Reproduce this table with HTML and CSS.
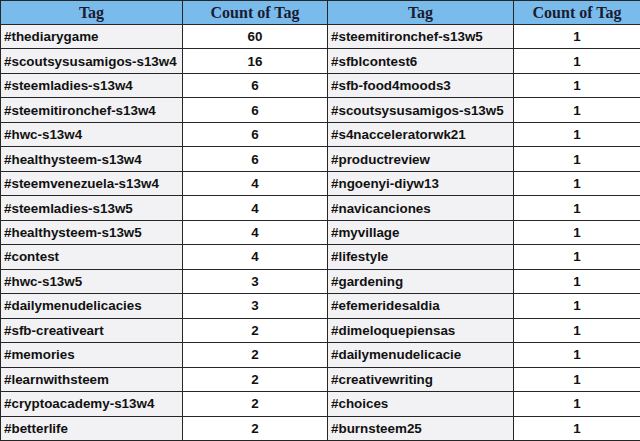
FILE: index.html
```html
<!DOCTYPE html>
<html>
<head>
<meta charset="utf-8">
<link rel="stylesheet" href="styles.css">
</head>
<body>
<table class="tags">
<colgroup><col class="c1"><col class="c2"><col class="c3"><col class="c4"></colgroup>
<thead>
<tr><th>Tag</th><th>Count of Tag</th><th>Tag</th><th>Count of Tag</th></tr>
</thead>
<tbody>
<tr><td class="tag">#thediarygame</td><td class="num">60</td><td class="tag">#steemitironchef-s13w5</td><td class="num">1</td></tr>
<tr><td class="tag">#scoutsysusamigos-s13w4</td><td class="num">16</td><td class="tag">#sfblcontest6</td><td class="num">1</td></tr>
<tr><td class="tag">#steemladies-s13w4</td><td class="num">6</td><td class="tag">#sfb-food4moods3</td><td class="num">1</td></tr>
<tr><td class="tag">#steemitironchef-s13w4</td><td class="num">6</td><td class="tag">#scoutsysusamigos-s13w5</td><td class="num">1</td></tr>
<tr><td class="tag">#hwc-s13w4</td><td class="num">6</td><td class="tag">#s4nacceleratorwk21</td><td class="num">1</td></tr>
<tr><td class="tag">#healthysteem-s13w4</td><td class="num">6</td><td class="tag">#productreview</td><td class="num">1</td></tr>
<tr><td class="tag">#steemvenezuela-s13w4</td><td class="num">4</td><td class="tag">#ngoenyi-diyw13</td><td class="num">1</td></tr>
<tr><td class="tag">#steemladies-s13w5</td><td class="num">4</td><td class="tag">#navicanciones</td><td class="num">1</td></tr>
<tr><td class="tag">#healthysteem-s13w5</td><td class="num">4</td><td class="tag">#myvillage</td><td class="num">1</td></tr>
<tr><td class="tag">#contest</td><td class="num">4</td><td class="tag">#lifestyle</td><td class="num">1</td></tr>
<tr><td class="tag">#hwc-s13w5</td><td class="num">3</td><td class="tag">#gardening</td><td class="num">1</td></tr>
<tr><td class="tag">#dailymenudelicacies</td><td class="num">3</td><td class="tag">#efemeridesaldia</td><td class="num">1</td></tr>
<tr><td class="tag">#sfb-creativeart</td><td class="num">2</td><td class="tag">#dimeloquepiensas</td><td class="num">1</td></tr>
<tr><td class="tag">#memories</td><td class="num">2</td><td class="tag">#dailymenudelicacie</td><td class="num">1</td></tr>
<tr><td class="tag">#learnwithsteem</td><td class="num">2</td><td class="tag">#creativewriting</td><td class="num">1</td></tr>
<tr><td class="tag">#cryptoacademy-s13w4</td><td class="num">2</td><td class="tag">#choices</td><td class="num">1</td></tr>
<tr><td class="tag">#betterlife</td><td class="num">2</td><td class="tag">#burnsteem25</td><td class="num">1</td></tr>
</tbody>
</table>
</body>
</html>
```
FILE: styles.css
```css
html, body {
  margin: 0;
  padding: 0;
  background: #ffffff;
}
.tags {
  border-collapse: collapse;
  table-layout: fixed;
  width: 640px;
  height: 441px;
  font-family: "Liberation Sans", Arial, sans-serif;
}
.c1 { width: 182px; }
.c2 { width: 145px; }
.c3 { width: 186px; }
.c4 { width: 127px; }
.tags th, .tags td {
  border: 1.5px solid #262626;
  padding: 0 3px;
  white-space: nowrap;
  overflow: hidden;
}
.tags th {
  height: 23px;
  background: #79bcec;
  color: #1b1b33;
  font-family: "Liberation Serif", "Times New Roman", serif;
  font-weight: bold;
  font-size: 16px;
  text-align: center;
}
.tags td {
  height: 23px;
  font-size: 13.4px;
  font-weight: bold;
  color: #111111;
}
.tags td.tag {
  background: #f2f2f4;
  text-align: left;
}
.tags td.num {
  background: #ffffff;
  text-align: center;
}
```
